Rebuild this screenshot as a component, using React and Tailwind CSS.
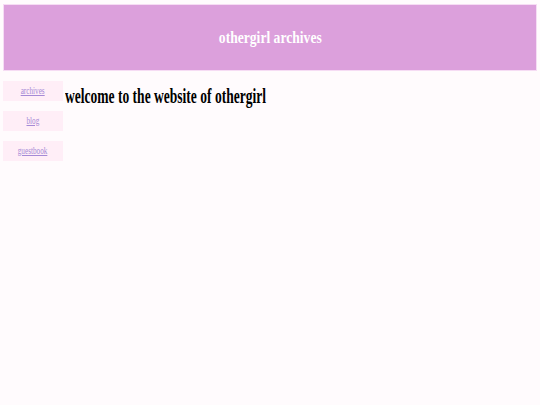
export default function App() {
  const serif = { fontFamily: '"Liberation Serif", "Times New Roman", serif' };
  return (
    <div className="min-h-screen bg-[#fffbfd] px-[3px] pt-[4px]" style={serif}>
      <header className="h-[67px] bg-[#dca0dc] border border-[#f6dcf4] flex items-center justify-center">
        <span className="inline-block text-[17px] font-bold text-white leading-none scale-x-[0.8] origin-center">
          othergirl archives
        </span>
      </header>
      <div className="flex mt-[10px]">
        <nav className="w-[60px] flex flex-col gap-[10px] shrink-0">
          {["archives", "blog", "guestbook"].map((l) => (
            <div key={l} className="h-[20px] bg-[#ffeef7] flex items-center justify-center">
              <a href="#" className="inline-block text-[10px] leading-none text-[#a58ad6] underline scale-x-[0.72] origin-center">
                {l}
              </a>
            </div>
          ))}
        </nav>
        <h1 className="ml-[2px] mt-[4px] text-[22px] font-bold text-black leading-none">
          <span className="inline-block scale-x-[0.615] origin-left whitespace-nowrap">welcome to the website of othergirl</span>
        </h1>
      </div>
    </div>
  );
}
